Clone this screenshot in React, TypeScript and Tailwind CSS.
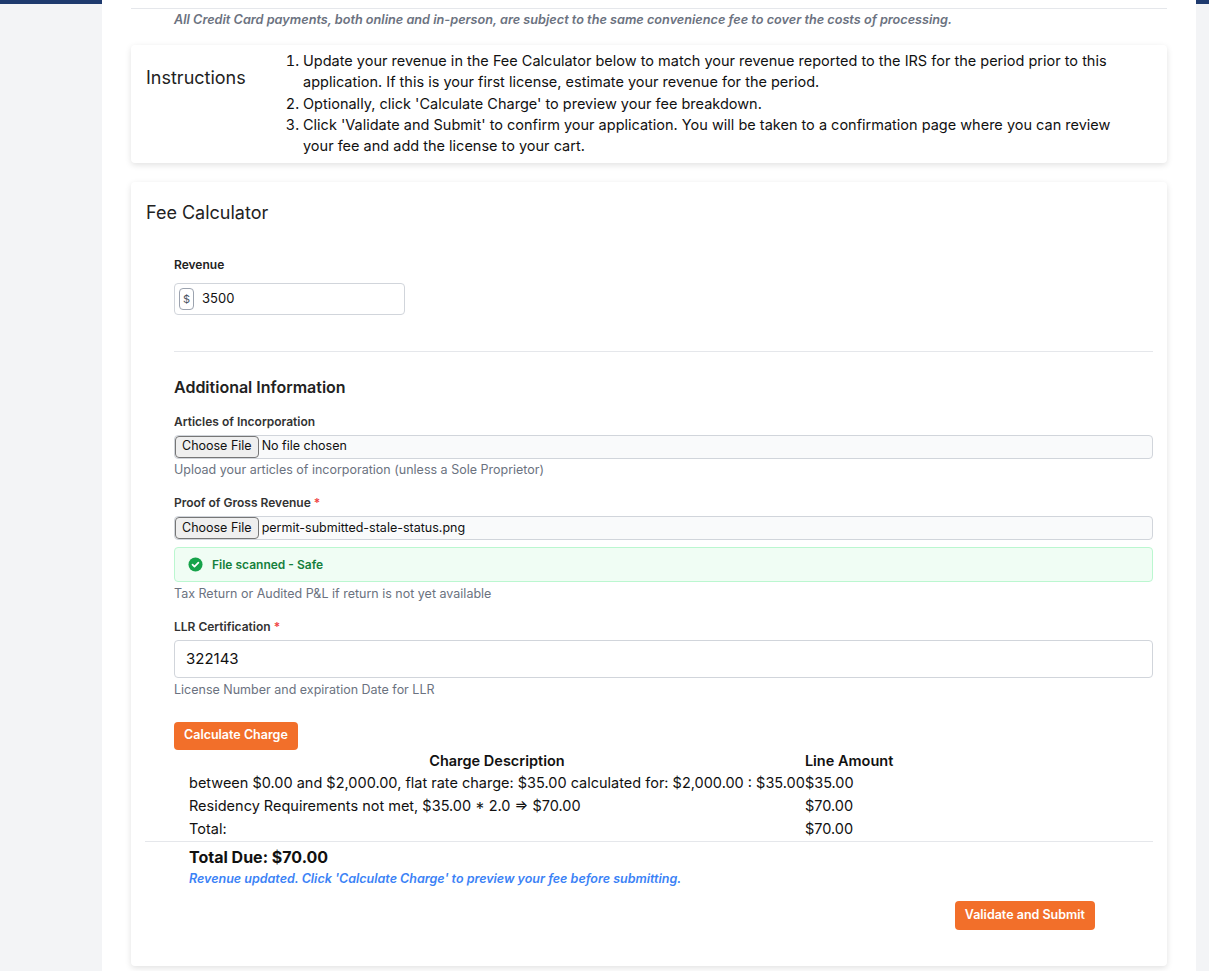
import React from "react";

const F = { fontFamily: "Inter, 'Liberation Sans', sans-serif" };

export default function App() {
  return (
    <div style={F} className="min-h-[971px] bg-[#f3f4f6] relative">
      <div className="h-[4px] bg-[#1e3a6e] w-full" />
      <div className="absolute top-0 left-[102px] w-[1094px] min-h-[971px] bg-white">
        <div className="mx-[29px] border-t border-[#e5e7eb] mt-[8px] pt-[1px] pl-[43px] text-[12.7px] italic font-semibold text-[#6b7280]">
          All Credit Card payments, both online and in-person, are subject to the same convenience fee to cover the costs of processing.
        </div>
        <div className="mx-[29px] mt-[16px] bg-white shadow-[0_2px_6px_rgba(0,0,0,0.12)] rounded flex pt-[5px] pb-[6px]">
          <div className="w-[156px] shrink-0 pl-[15px] pt-[14px] text-[18px] text-[#222]">Instructions</div>
          <ol className="text-[14.5px] leading-[21.3px] text-[#111] pr-[24px] list-decimal pl-[16px]">
            <li>Update your revenue in the Fee Calculator below to match your revenue reported to the IRS for the period prior to this application. If this is your first license, estimate your revenue for the period.</li>
            <li>Optionally, click 'Calculate Charge' to preview your fee breakdown.</li>
            <li>Click 'Validate and Submit' to confirm your application. You will be taken to a confirmation page where you can review your fee and add the license to your cart.</li>
          </ol>
        </div>
        <div className="mx-[29px] mt-[19px] bg-white shadow-[0_2px_6px_rgba(0,0,0,0.12)] rounded pb-[36px]">
          <div className="pl-[15px] pt-[17px] text-[18px] text-[#222]">Fee Calculator</div>
          <div className="pl-[43px] pr-[14px]">
            <div className="mt-[30px] text-[12px] font-semibold text-[#222]">Revenue</div>
            <div className="mt-[9px] w-[231px] h-[32px] border border-[#d1d5db] rounded flex items-center pl-[4px] gap-[8px]">
              <span className="border border-[#9ca3af] rounded text-[11px] text-[#4b5563] px-[3px] leading-[20px]">$</span>
              <span className="text-[13px] text-[#111]">3500</span>
            </div>
            <div className="mt-[36px] border-t border-[#e5e7eb]" />
            <div className="mt-[23px] text-[16px] font-semibold text-[#222]">Additional Information</div>
            <div className="mt-[14px] text-[12px] font-semibold text-[#333]">Articles of Incorporation</div>
            <div className="mt-[4px] h-[24px] border border-[#d1d5db] rounded bg-[#f9fafb] flex items-center text-[12.5px] text-[#111]">
              <span className="h-[22px] px-[6px] border border-[#767676] bg-[#efefef] rounded-sm flex items-center mr-[3px]">Choose File</span>No file chosen
            </div>
            <div className="mt-[2px] text-[12.5px] text-[#6b7280]">Upload your articles of incorporation (unless a Sole Proprietor)</div>
            <div className="mt-[15px] text-[12px] font-semibold text-[#333]">Proof of Gross Revenue <span className="text-[#ef4444]">*</span></div>
            <div className="mt-[4px] h-[24px] border border-[#d1d5db] rounded bg-[#f9fafb] flex items-center text-[12.5px] text-[#111]">
              <span className="h-[22px] px-[6px] border border-[#767676] bg-[#efefef] rounded-sm flex items-center mr-[3px]">Choose File</span>permit-submitted-stale-status.png
            </div>
            <div className="mt-[7px] h-[35px] border border-[#bbf7d0] bg-[#f0fdf4] rounded flex items-center pl-[13px] gap-[9px] text-[12px] font-semibold text-[#15803d]">
              <svg width="15" height="15" viewBox="0 0 16 16"><circle cx="8" cy="8" r="7.5" fill="#16a34a"/><path d="M4.8 8.2l2.1 2.1 4.2-4.3" stroke="#fff" strokeWidth="1.8" fill="none" strokeLinecap="round" strokeLinejoin="round"/></svg>
              File scanned - Safe
            </div>
            <div className="mt-[3px] text-[12.5px] text-[#6b7280]">Tax Return or Audited P&amp;L if return is not yet available</div>
            <div className="mt-[14px] text-[12px] font-semibold text-[#333]">LLR Certification <span className="text-[#ef4444]">*</span></div>
            <div className="mt-[4px] h-[38px] border border-[#d1d5db] rounded flex items-center pl-[11px] text-[15px] text-[#111]">322143</div>
            <div className="mt-[3px] text-[12.5px] text-[#6b7280]">License Number and expiration Date for LLR</div>
            <button className="mt-[22px] h-[28px] px-[10px] rounded bg-[#f26f2a] text-white text-[12.5px] font-semibold">Calculate Charge</button>
          </div>
          <table className="ml-[58px] text-[14.5px] text-[#111] border-collapse">
            <thead>
              <tr><th className="w-[611px] text-center font-semibold h-[22px]">Charge Description</th><th className="text-left font-semibold">Line Amount</th></tr>
            </thead>
            <tbody>
              <tr className="h-[23px]"><td className="whitespace-nowrap">between $0.00 and $2,000.00, flat rate charge: $35.00 calculated for: $2,000.00 : $35.00</td><td>$35.00</td></tr>
              <tr className="h-[23px]"><td>Residency Requirements not met, $35.00 * 2.0 ⇒ $70.00</td><td>$70.00</td></tr>
              <tr className="h-[23px]"><td>Total:</td><td>$70.00</td></tr>
            </tbody>
          </table>
          <div className="mx-[14px] border-t border-[#e5e7eb]" />
          <div className="pl-[58px] mt-[3px] text-[16px] font-bold text-[#111]">Total Due: $70.00</div>
          <div className="pl-[58px] mt-[1px] text-[12.5px] italic font-semibold text-[#3b82f6]">Revenue updated. Click 'Calculate Charge' to preview your fee before submitting.</div>
          <div className="flex justify-end pr-[72px] mt-[12px]">
            <button className="h-[29px] px-[10px] rounded bg-[#f26f2a] text-white text-[12.5px] font-semibold">Validate and Submit</button>
          </div>
        </div>
      </div>
    </div>
  );
}
